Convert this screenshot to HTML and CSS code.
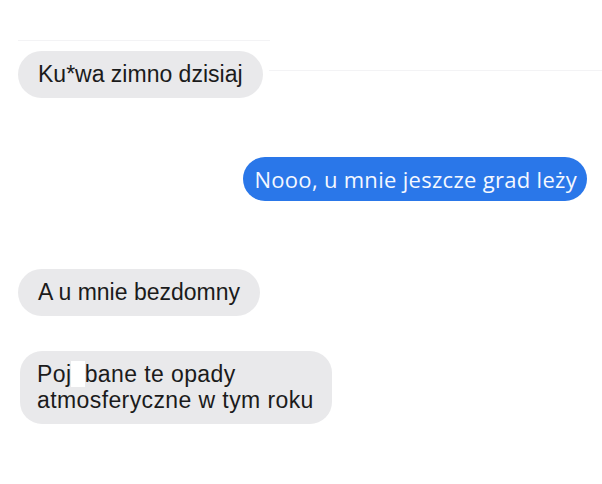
FILE: index.html
```html
<!DOCTYPE html>
<html lang="pl">
<head>
    <meta charset="UTF-8">
    <title>Wiadomości</title>
    <link rel="stylesheet" href="styles.css">
</head>
<body>
    <div class="chat">
        <div class="linia linia-gora"></div>
        <div class="wiersz">
            <p class="dymek odebrany">Ku*wa zimno dzisiaj</p>
            <div class="linia linia-prawa"></div>
        </div>

        <p class="dymek wyslany">Nooo, u mnie jeszcze grad leży</p>

        <p class="dymek odebrany" id="bezdomny">A u mnie bezdomny</p>

        <p class="dymek odebrany dlugi">Poj<span class="cenzura">e</span>bane te opady<br>atmosferyczne w tym roku</p>
    </div>
</body>
</html>
```

FILE: styles.css
```css
body {
    background-color: #ffffff;
    margin: 0;
    padding: 0;
    font-family: 'Liberation Sans', Arial, sans-serif;
}

.chat {
    width: 602px;
    height: 484px;
    display: flex;
    flex-direction: column;
    align-items: flex-start;
    padding: 40px 15px 0 18px;
    box-sizing: border-box;
}

.linia {
    height: 1px;
    background-color: #f3f3f5;
}

.linia-gora {
    width: 252px;
}

.wiersz {
    display: flex;
    align-items: center;
    width: 100%;
    margin-top: 10px;
}

.linia-prawa {
    flex: 1;
    margin-left: 6px;
    margin-right: -15px;
    margin-top: -8px;
}

.dymek {
    margin: 0;
    height: 47px;
    display: flex;
    align-items: center;
    padding: 0 20px;
    border-radius: 24px;
    font-size: 23px;
    box-sizing: border-box;
}

.odebrany {
    background-color: #e9e9eb;
    color: #1b1b1b;
}

.wyslany {
    align-self: flex-end;
    margin-top: 59px;
    height: 44px;
    padding: 0 10px 0 11px;
    border-radius: 22px;
    background-color: #2a77e9;
    color: #f4f8ff;
    font-family: 'Open Sans', sans-serif;
    font-size: 22px;
    letter-spacing: 0.3px;
}

#bezdomny {
    margin-top: 68px;
}

.dlugi {
    display: block;
    height: 73px;
    margin-top: 35px;
    margin-left: 2px;
    padding: 10px 18px 0 17px;
    border-radius: 22px;
    line-height: 26px;
    letter-spacing: 0.4px;
}

.cenzura {
    background-color: #ffffff;
    color: #ffffff;
}
```
